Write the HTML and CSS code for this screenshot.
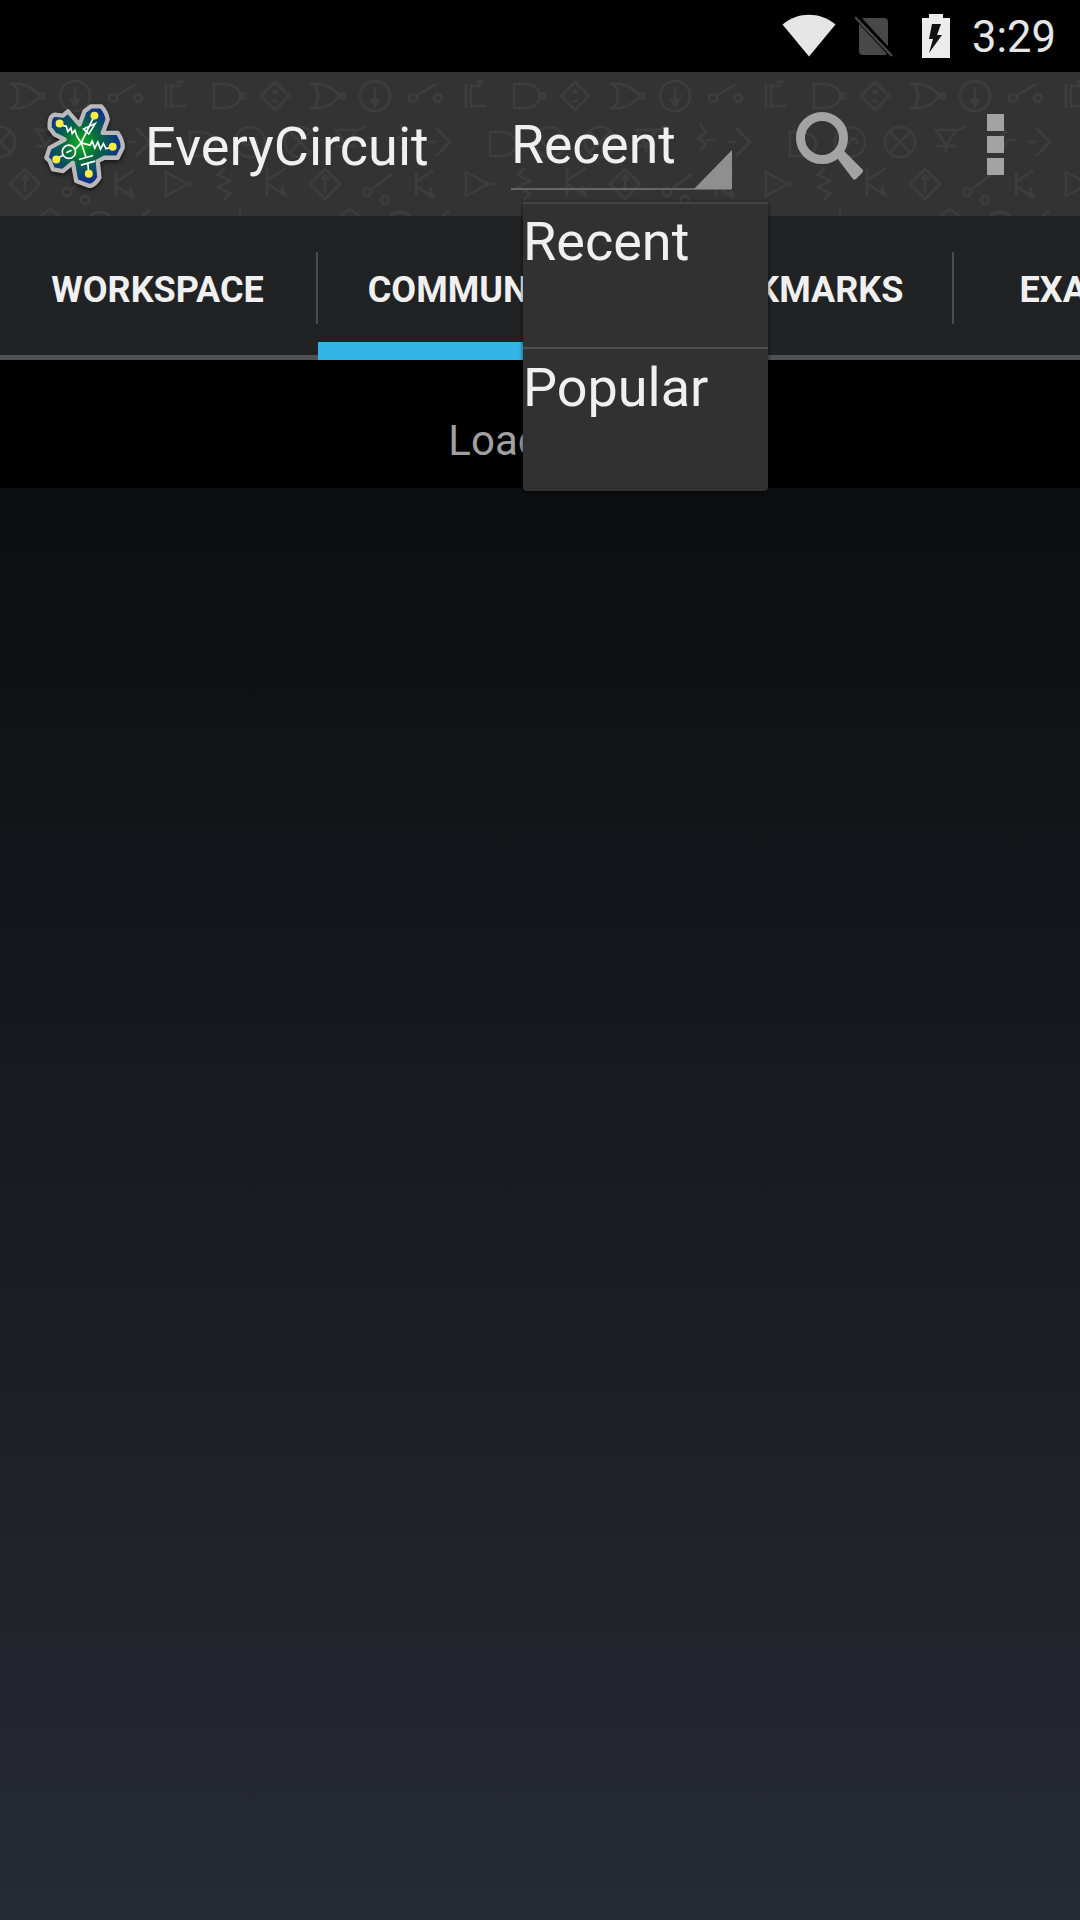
FILE: index.html
```html
<!DOCTYPE html>
<html lang="en">
<head>
  <meta charset="UTF-8">
  <title>EveryCircuit</title>
  <link rel="stylesheet" href="styles.css">
</head>
<body>
  <div class="status-bar">
    <svg class="icon-wifi" width="54" height="44" viewBox="0 0 54 44">
      <path d="M0.5 10.500C16 -2.500 38 -2.500 53.500 10.500L27 42.500Z" fill="#e6e6e6"/>
    </svg>
    <svg class="icon-sim" width="40" height="42" viewBox="0 0 40 42">
      <path d="M8 3H29Q33 3 33 7V36Q33 40 29 40H8Q4 40 4 36V7Q4 3 8 3Z" fill="#484848"/>
      <path d="M0 0L38 41" stroke="#000" stroke-width="6"/>
      <path d="M0 2L37 41" stroke="#484848" stroke-width="2.500"/>
    </svg>
    <svg class="icon-battery" width="28" height="44" viewBox="0 0 28 44">
      <path d="M7 0H21V4H28V44H0V4H7Z" fill="#ececec"/>
      <path d="M10 10H19L15 21H20L7 39L11 25H7Z" fill="#111"/>
    </svg>
    <span class="clock">3:29</span>
  </div>

  <div class="toolbar">
    <svg class="toolbar-bg" width="1080" height="144" viewBox="0 0 1080 144">
      <defs>
        <pattern id="circuitTile" width="300" height="144" patternUnits="userSpaceOnUse">
          <g fill="none" stroke="#3d3d3d" stroke-width="2.500">
            <!-- row 1 -->
            <path d="M14 12Q22 24 14 36M10 12H20Q32 14 40 24Q32 34 20 36H10"/>
            <circle cx="42" cy="24" r="2.500"/>
            <circle cx="75" cy="24" r="15"/>
            <path d="M75 15V32M71 27L75 33L79 27"/>
            <circle cx="113" cy="26" r="4"/>
            <circle cx="138" cy="26" r="4"/>
            <path d="M116 24L136 12"/>
            <path d="M166 12V36M171 12V36M171 14H180M171 34H186M180 8V14M176 10H184"/>
            <path d="M214 12V36H226Q240 34 240 24Q240 14 226 12Z"/>
            <circle cx="243" cy="24" r="2.500"/>
            <path d="M275 10L289 24L275 38L261 24ZM275 17V22M272 20H278M272 29H278"/>
            <!-- row 2 -->
            <circle cx="0" cy="70" r="15"/>
            <path d="M-10 60L10 80M10 60L-10 80"/>
            <circle cx="300" cy="70" r="15"/>
            <path d="M290 60L310 80M310 60L290 80"/>
            <path d="M36 58H56L46 74ZM36 74H56M46 74V80M54 60L66 54"/>
            <path d="M100 52L106 60L98 66L106 72L100 78M106 68H116"/>
            <path d="M136 56L150 70L136 84M128 70H136"/>
            <path d="M190 60V84H202Q216 82 216 72Q216 62 202 60Z"/>
            <circle cx="250" cy="70" r="15"/>
            <path d="M242 68Q246 78 250 70Q254 62 258 72"/>
            <!-- row 3 -->
            <path d="M25 97L40 112L25 127L10 112ZM25 104V120M21 108L25 103L29 108"/>
            <circle cx="67" cy="120" r="4"/>
            <circle cx="85" cy="128" r="4"/>
            <path d="M70 118L92 102"/>
            <path d="M116 100V124M116 110L134 98M116 114L134 126M127 120L134 126L130 116"/>
            <path d="M166 100V124L188 112ZM188 112H194"/>
            <path d="M225 96L218 103L230 109L218 115L230 121L224 128"/>
            <path d="M267 96V124M267 108L286 96M267 112L286 124M280 118L286 124L282 114"/>
            <!-- row 4, cut off by the tabs -->
            <path d="M40 144L50 137L60 144M142 144L150 138M240 144V138M90 144Q100 136 110 144"/>
          </g>
        </pattern>
      </defs>
      <rect width="1080" height="144" fill="url(#circuitTile)"/>
    </svg>

    <svg class="logo" width="83" height="87" viewBox="130 85 250 260">
      <defs>
        <radialGradient id="logoFill" gradientUnits="userSpaceOnUse" cx="245" cy="212" r="115">
          <stop offset="0" stop-color="#0fb51d"/>
          <stop offset="0.45" stop-color="#056c3c"/>
          <stop offset="1" stop-color="#10308c"/>
        </radialGradient>
      </defs>
      <path d="M150 150Q152 128 165 125L190 128L205 115L240 155L255 115L275 100L305 100Q322 118 325 140L310 180L355 180Q372 205 370 225L355 255L315 255L295 265L300 315Q285 340 270 340L230 325L220 270L190 295L160 290L150 265L140 255L150 225L195 200L165 185L150 165Z" fill="url(#logoFill)" stroke="#b9b9b9" stroke-width="13" stroke-linejoin="round"/>
      <g fill="none" stroke="#fff" stroke-width="5">
        <path d="M245 210L232 190L226 172L218 182L214 165L205 176L200 160L190 158"/>
        <path d="M245 210L285 128M252 168L287 152L268 183Z"/>
        <path d="M245 210L272 217L278 205L286 226L295 208L303 229L312 212L320 228L340 222"/>
        <path d="M245 210L259 252M238 260L281 248M244 277L287 265M265 271L268 303"/>
        <circle cx="208" cy="237" r="20"/>
        <path d="M228 228L245 210M190 247L170 260M200 240L216 232"/>
      </g>
      <g fill="#f5ec45">
        <circle cx="180" cy="152" r="12"/>
        <circle cx="285" cy="128" r="12"/>
        <circle cx="340" cy="222" r="12"/>
        <circle cx="268" cy="303" r="12"/>
        <circle cx="170" cy="260" r="12"/>
      </g>
    </svg>

    <span class="app-title">EveryCircuit</span>

    <div class="spinner">
      <span class="spinner-text">Recent</span>
      <svg class="spinner-arrow" width="38" height="39" viewBox="0 0 38 39">
        <path d="M38 0V39H0Z" fill="#8f8f8f"/>
      </svg>
    </div>

    <svg class="icon-search" width="68" height="68" viewBox="0 0 68 68">
      <circle cx="26" cy="26" r="21.500" fill="none" stroke="#a3a3a3" stroke-width="9"/>
      <path d="M41 46L48 39L67 58Q67 60 66 61L60 67Q58 68 57 67Z" fill="#a3a3a3"/>
    </svg>

    <div class="overflow-menu">
      <span class="overflow-dot"></span>
      <span class="overflow-dot"></span>
      <span class="overflow-dot"></span>
    </div>
  </div>

  <div class="tabs">
    <div class="tab">WORKSPACE</div>
    <div class="tab tab-active">COMMUNITY</div>
    <div class="tab">BOOKMARKS</div>
    <div class="tab">EXAMPLES</div>
  </div>

  <div class="loading">Loading...</div>

  <div class="popup">
    <div class="popup-item">Recent</div>
    <div class="popup-item">Popular</div>
  </div>
</body>
</html>
```

FILE: styles.css
```css
html, body {
  margin: 0;
  height: 1920px;
}
body {
  width: 1080px;
  overflow: hidden;
  position: relative;
  font-family: Roboto, "Liberation Sans", sans-serif;
  color: #f0f0f0;
  background: linear-gradient(#0c0e10 488px, #262a33 1920px);
}

.status-bar {
  height: 72px;
  background-color: #000;
  display: flex;
  align-items: center;
  padding-right: 24px;
  justify-content: flex-end;
}
.status-bar svg {
  display: block;
}
.icon-wifi {
  margin-right: 19px;
  margin-top: -1px;
}
.icon-sim {
  margin-right: 27px;
  margin-top: -1px;
}
.icon-battery {
  margin-right: 22px;
  margin-top: -1px;
}
.clock {
  font-size: 43.500px;
  color: #e6e6e6;
  margin-top: 3px;
}

.toolbar {
  height: 144px;
  background-color: #333;
  display: flex;
  align-items: center;
  position: relative;
}
.toolbar-bg {
  position: absolute;
  left: 0;
  top: 0;
}
.logo {
  position: relative;
  margin-left: 43px;
  filter: drop-shadow(0 2px 2px rgba(0, 0, 0, 0.6));
}
.app-title {
  position: relative;
  font-size: 54px;
  margin-left: 19px;
  width: 366px;
  top: 2px;
}
.spinner {
  position: relative;
  width: 220px;
  height: 82px;
  margin-top: 10px;
  border-bottom: 2px solid #666;
  box-sizing: border-box;
}
.spinner-text {
  font-size: 53.500px;
  line-height: 74px;
}
.spinner-arrow {
  position: absolute;
  right: -1px;
  bottom: -1px;
}
.icon-search {
  position: relative;
  margin-left: 65px;
  margin-top: 4px;
}
.overflow-menu {
  position: relative;
  margin-left: 123px;
  display: flex;
  flex-direction: column;
  gap: 5px;
  margin-top: 1px;
}
.overflow-dot {
  width: 17px;
  height: 17px;
  background-color: #a3a3a3;
}

.tabs {
  height: 144px;
  background-color: #202224;
  display: flex;
  overflow: hidden;
  position: relative;
}
.tabs::before {
  content: "";
  position: absolute;
  left: 0;
  right: 0;
  bottom: 0;
  height: 5px;
  background-color: #505152;
}
.tab {
  flex: 0 0 318px;
  height: 139px;
  display: flex;
  align-items: center;
  justify-content: center;
  font-size: 36px;
  font-weight: bold;
  position: relative;
  box-sizing: border-box;
  padding: 8px 3px 0 0;
}
.tab + .tab::before {
  content: "";
  position: absolute;
  left: -2px;
  top: 36px;
  width: 2px;
  height: 72px;
  background-color: #4a4c4e;
}
.tab-active::after {
  content: "";
  position: absolute;
  left: 0;
  right: 0;
  top: 126px;
  height: 18px;
  background-color: #33b5e5;
}

.loading {
  height: 128px;
  background-color: #000;
  display: flex;
  align-items: center;
  justify-content: center;
  font-size: 42px;
  color: #a0a0a0;
  padding-top: 32px;
  box-sizing: border-box;
}

.popup {
  position: absolute;
  left: 523px;
  top: 202px;
  width: 245px;
  height: 289px;
  background-color: #313131;
  border-top: 2px solid #444;
  box-sizing: border-box;
  border-radius: 0 0 4px 4px;
  box-shadow: 0 1px 4px rgba(0, 0, 0, 0.6);
}
.popup-item {
  height: 143px;
  font-size: 54px;
  line-height: 76px;
  box-sizing: border-box;
}
.popup-item + .popup-item {
  border-top: 2px solid #505050;
  height: 144px;
  padding-top: 1px;
}
```
